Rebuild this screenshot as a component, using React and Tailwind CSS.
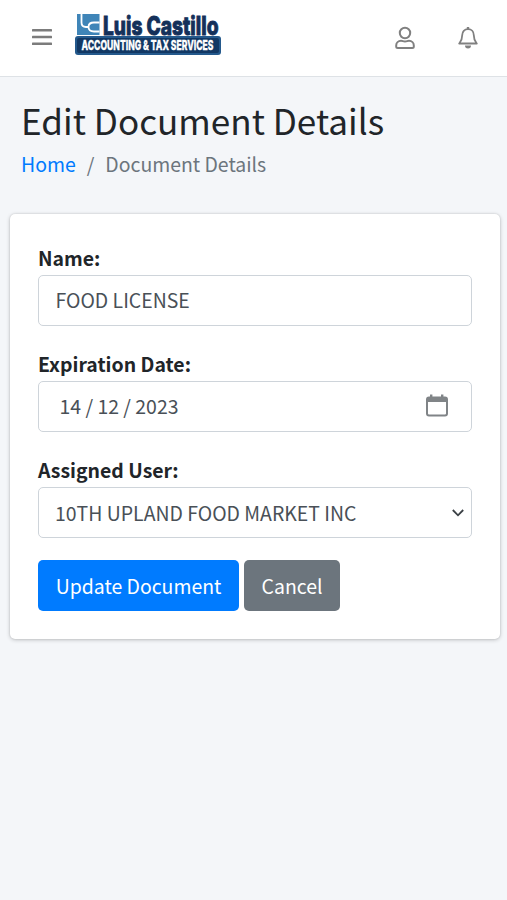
import { useState } from 'react';

const Logo = () => (
  <svg width="148" height="44" viewBox="0 0 148 44" className="block overflow-visible" role="img">
    <rect x="3" y="1" width="22.5" height="21" fill="#3f85b8" />
    <path d="M7.5 1 V9.5 Q7.5 14 12 14 H14.5 M25.5 9.5 H20 Q14.5 9.5 14.5 14 Q14.5 18.5 20 18.5 H25.5" fill="none" stroke="#fff" strokeWidth="1.8" />
    <rect x="1" y="23" width="146" height="19" rx="3" fill="#24598c" />
    <rect x="3" y="25" width="142" height="15" rx="2" fill="#123864" />
    <text
      x="29"
      y="21.8"
      textLength="115.5"
      lengthAdjust="spacingAndGlyphs"
      fill="#14305a"
      stroke="#14305a"
      strokeWidth="0.9"
      className="font-['Inter',sans-serif] text-[25.5px] font-extrabold"
    >
      Luis Castillo
    </text>
    <text
      x="7.5"
      y="37.2"
      textLength="132"
      lengthAdjust="spacingAndGlyphs"
      fill="#fff"
      stroke="#fff"
      strokeWidth="0.3"
      className="font-['Inter',sans-serif] text-[13.5px] font-extrabold"
    >
      ACCOUNTING &amp; TAX SERVICES
    </text>
  </svg>
);

const MenuIcon = () => (
  <svg width="20" height="18" viewBox="0 0 20 18" fill="#7c7c7c">
    <rect y="1" width="20" height="2.5" rx="0.6" />
    <rect y="7.8" width="20" height="2.5" rx="0.6" />
    <rect y="14.6" width="20" height="2.5" rx="0.6" />
  </svg>
);

const UserIcon = () => (
  <svg width="20" height="24" viewBox="0 0 20 24" fill="none" stroke="#808080" strokeWidth="2">
    <circle cx="10" cy="7" r="5.2" />
    <path d="M1.2 20.5 V19.5 C1.2 16.8 3.3 14.8 6 14.8 C7.6 14.8 8 15.6 10 15.6 C12 15.6 12.4 14.8 14 14.8 C16.7 14.8 18.8 16.8 18.8 19.5 V20.5 Q18.8 22 17.3 22 H2.7 Q1.2 22 1.2 20.5 Z" />
  </svg>
);

const BellIcon = () => (
  <svg width="20" height="24" viewBox="0 0 20 24" fill="none" stroke="#808080" strokeWidth="1.8" strokeLinejoin="round">
    <path d="M10 1 V3" strokeWidth="2.4" />
    <path d="M10 3.1 C6.4 3.1 4.2 5.6 4.2 9.2 C4.2 14 2.6 15.6 1.2 17.5 H18.8 C17.4 15.6 15.8 14 15.8 9.2 C15.8 5.6 13.6 3.1 10 3.1 Z" />
    <path d="M7 19.5 H13 A3 3 0 0 1 7 19.5 Z" fill="#808080" stroke="none" />
  </svg>
);

const CalendarIcon = () => (
  <svg width="22" height="23" viewBox="0 0 22 23">
    <path d="M5.2 0.5 V4 M16.2 0.5 V4" stroke="#808487" strokeWidth="2.4" />
    <rect x="1" y="3.6" width="20" height="18" rx="2" fill="none" stroke="#808487" strokeWidth="2" />
    <rect x="1" y="3" width="20" height="5" rx="1" fill="#808487" />
  </svg>
);

const Field = ({ label, children }) => (
  <label className="mb-[22.1px] block">
    <span className="block h-[32.6px] text-[19.45px] leading-8 font-bold text-[#212529]">{label}</span>
    <div className="flex h-[51.3px] items-center rounded-[5px] border border-[#ced4da] bg-white text-[19.45px] text-[#495057]">
      {children}
    </div>
  </label>
);

export default function App() {
  const [name, setName] = useState('FOOD LICENSE');
  const [date, setDate] = useState('14 / 12 / 2023');

  return (
    <div className="min-h-[900px] bg-[#f4f6f9] font-['Noto_Sans_CJK_SC',sans-serif] text-[#212529]">
      <header className="flex h-[77px] items-center border-b border-[#dee2e6] bg-white pr-[29px] pl-8">
        <button className="pb-[2px]">
          <MenuIcon />
        </button>
        <div className="mb-[6px] ml-[22px]">
          <Logo />
        </div>
        <div className="mb-[1px] ml-auto flex gap-[43px]">
          <UserIcon />
          <BellIcon />
        </div>
      </header>

      <section className="px-[21px] pt-[20px]">
        <h1 className="text-[35.1px] leading-[46px] whitespace-nowrap">Edit Document Details</h1>
        <nav className="flex h-[34px] gap-[11px] pt-[5px] text-[19.45px] leading-[32px] whitespace-nowrap">
          <a href="#" className="text-[#007bff]">Home</a>
          <span className="text-[#6c757d]">/</span>
          <span className="text-[#6c757d]">Document Details</span>
        </nav>
      </section>

      <main className="mt-[37px] mr-[7px] ml-[10px] h-[425px] rounded-[5px] bg-white px-7 pt-[28px] shadow-[0_0_2px_rgba(0,0,0,0.15),0_1px_4px_rgba(0,0,0,0.2)]">
        <Field label="Name:">
          <input
            value={name}
            onChange={e => setName(e.target.value)}
            className="w-full bg-transparent px-[16.5px] pb-[2px] outline-none"
          />
        </Field>
        <Field label="Expiration Date:">
          <input
            value={date}
            onChange={e => setDate(e.target.value)}
            className="min-w-0 flex-1 bg-transparent pb-[2px] pl-[20.5px] outline-none"
          />
          <div className="mr-[23px] mb-[2px]">
            <CalendarIcon />
          </div>
        </Field>
        <Field label="Assigned User:">
          <select className="h-full min-w-0 flex-1 appearance-none bg-transparent pl-[16px] outline-none">
            <option>10TH UPLAND FOOD MARKET INC</option>
          </select>
          <svg width="12" height="8" viewBox="0 0 12 8" className="mt-[2px] mr-[7px]" fill="none" stroke="#3b4045" strokeWidth="1.8">
            <path d="M0.8 1 L6 6.3 L11.2 1" />
          </svg>
        </Field>
        <div className="flex gap-[5px] text-[19.45px] text-white">
          <button className="h-[51px] w-[201px] rounded-[5px] bg-[#007bff] whitespace-nowrap">Update Document</button>
          <button className="h-[51px] w-[96px] rounded-[5px] bg-[#6c757d]">Cancel</button>
        </div>
      </main>
    </div>
  );
}
